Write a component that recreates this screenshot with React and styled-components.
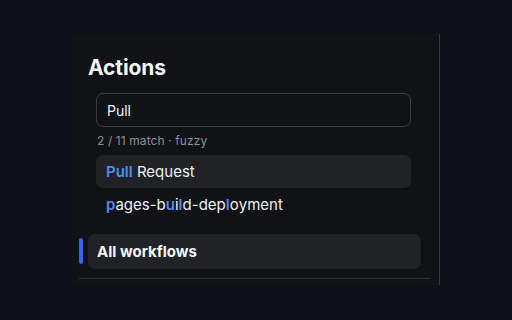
import React from "react";
import styled, { createGlobalStyle } from "styled-components";

const GlobalStyle = createGlobalStyle`
  html, body {
    margin: 0;
    padding: 0;
    background: #0d1016;
    font-family: Inter, "Noto Sans", sans-serif;
    -webkit-font-smoothing: antialiased;
  }
  #root {
    height: 320px;
    overflow: hidden;
  }
`;

const Panel = styled.aside`
  box-sizing: border-box;
  width: 368px;
  margin: 34px 0 0 72px;
  padding: 21px 0 6px 0;
  background: #111216;
  border-right: 1px solid #34373c;
`;

const Title = styled.h2`
  margin: 0;
  padding-left: 16px;
  font-size: 21px;
  line-height: 26px;
  font-weight: 700;
  color: #f4f5f7;
  letter-spacing: -0.1px;
`;

const Search = styled.div`
  padding: 12px 28px 0 24px;
`;

const Input = styled.input`
  box-sizing: border-box;
  display: block;
  width: 100%;
  height: 34px;
  padding: 0 10px;
  background: #111216;
  border: 1px solid #3b3e43;
  border-radius: 7px;
  color: #f2f3f5;
  font-family: inherit;
  font-size: 14px;
  outline: none;
`;

const Meta = styled.div`
  margin: 6px 0 6px 1px;
  font-size: 12px;
  line-height: 16px;
  color: #8a8e95;
  letter-spacing: 0.1px;
`;

const Option = styled.div`
  box-sizing: border-box;
  height: ${(p) => (p.$active ? "33px" : "32px")};
  display: flex;
  align-items: center;
  padding: 0 10px;
  border-radius: 7px;
  background: ${(p) => (p.$active ? "#202226" : "transparent")};
  color: #eceef1;
  font-size: 15px;
`;

const Hit = styled.span`
  color: #4f8cf2;
  font-weight: 600;
`;

const Nav = styled.div`
  padding: 14px 18px 0 16px;
`;

const NavItem = styled.div`
  position: relative;
  box-sizing: border-box;
  height: 35px;
  display: flex;
  align-items: center;
  padding: 0 9px;
  border-radius: 7px;
  background: #202226;
  color: #f4f5f7;
  font-size: 15px;
  font-weight: 700;
`;

const Marker = styled.span`
  position: absolute;
  left: -9px;
  top: 4px;
  width: 4px;
  height: 26px;
  border-radius: 2px;
  background: #3a66ea;
`;

const Divider = styled.hr`
  margin: 9px 9px 0 7px;
  border: 0;
  height: 1px;
  background: #2b2d32;
`;

const highlight = (text, idx) =>
  text.split("").map((ch, i) =>
    idx.includes(i) ? <Hit key={i}>{ch}</Hit> : <span key={i}>{ch}</span>
  );

export default function App() {
  return (
    <>
      <GlobalStyle />
      <Panel>
        <Title>Actions</Title>
        <Search>
          <Input value="Pull" readOnly />
          <Meta>2 / 11 match · fuzzy</Meta>
          <Option $active>
            <Hit>Pull</Hit>&nbsp;Request
          </Option>
          <Option>{highlight("pages-build-deployment", [0, 7, 9, 15])}</Option>
        </Search>
        <Nav>
          <NavItem>
            <Marker />
            All workflows
          </NavItem>
        </Nav>
        <Divider />
      </Panel>
    </>
  );
}
